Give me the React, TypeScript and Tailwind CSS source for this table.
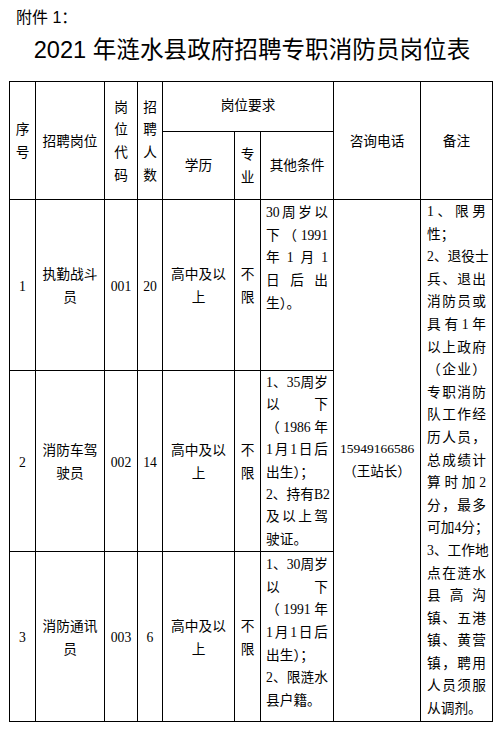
import React from "react"

const cellFont = { fontFamily: '"Liberation Serif", "Noto Sans CJK SC", serif' }

// one justified line: digit/latin runs stay together, every other glyph is spread out
const J = ({ t, last }: { t: string; last?: boolean }) => {
  if (last) return <div className="whitespace-nowrap text-left">{t}</div>
  const parts = t.match(/[0-9A-Za-z]+|\S/g) || []
  return (
    <div className="flex justify-between whitespace-nowrap">
      {parts.map((p, i) => (
        <span key={i}>{p}</span>
      ))}
    </div>
  )
}

const Lines = ({ lines }: { lines: string[] }) => (
  <>
    {lines.map((l, i) => (
      <div key={i} className="whitespace-nowrap">
        {l}
      </div>
    ))}
  </>
)

const Para = ({ lines }: { lines: [string, boolean?][] }) => (
  <>
    {lines.map(([t, last], i) => (
      <J key={i} t={t} last={last} />
    ))}
  </>
)

const td = "border border-black text-center align-middle p-0"

const rows = [
  {
    no: "1",
    name: ["执勤战斗", "员"],
    code: "001",
    count: "20",
    other: [["30 周岁以"], ["下（ 1991"], ["年 1 月 1"], ["日 后 出"], ["生）。", true]] as [string, boolean?][],
    h: "h-[171px]",
    oc: "pt-[2px] leading-[22.7px]",
  },
  {
    no: "2",
    name: ["消防车驾", "驶员"],
    code: "002",
    count: "14",
    other: [
      ["1、35 周岁"],
      ["以 下"],
      ["（1986 年"],
      ["1月1日后"],
      ["出生）；", true],
      ["2、持有 B2"],
      ["及以上驾"],
      ["驶证。", true],
    ] as [string, boolean?][],
    h: "h-[181px]",
    oc: "pt-px leading-[22.4px]",
  },
  {
    no: "3",
    name: ["消防通讯", "员"],
    code: "003",
    count: "6",
    other: [
      ["1、30 周岁"],
      ["以 下"],
      ["（1991 年"],
      ["1月1日后"],
      ["出生）；", true],
      ["2、限涟水"],
      ["县户籍。", true],
    ] as [string, boolean?][],
    h: "h-[170px]",
    oc: "pt-[2px] leading-[22.6px]",
  },
]

const notes: [string, boolean?][] = [
  ["1、限男"],
  ["性；", true],
  ["2、退役士"],
  ["兵、退出"],
  ["消防员或"],
  ["具有 1 年"],
  ["以上政府"],
  ["（企业）"],
  ["专职消防"],
  ["队工作经"],
  ["历人员，"],
  ["总成绩计"],
  ["算时加 2"],
  ["分，最多"],
  ["可加4分；", true],
  ["3、工作地"],
  ["点在涟水"],
  ["县高沟"],
  ["镇、五港"],
  ["镇、黄营"],
  ["镇，聘用"],
  ["人员须服"],
  ["从调剂。", true],
]

export default function App() {
  return (
    <div className="w-[504px] h-[734px] bg-white text-black overflow-hidden">
      <div
        className="pt-[6px] pl-[16px] text-[16px] leading-[24px]"
        style={{ fontFamily: '"Liberation Sans", "Noto Sans CJK SC", sans-serif' }}
      >
        附件 1：
      </div>
      <div
        className="mt-[4px] text-center text-[23.6px] leading-[32px]"
        style={{ fontFamily: '"Liberation Sans", "Noto Sans CJK SC", sans-serif' }}
      >
        2021 年涟水县政府招聘专职消防员岗位表
      </div>

      <table
        className="mt-[15px] ml-[9px] w-[483px] table-fixed border-collapse text-[13.7px] leading-[22.7px]"
        style={cellFont}
      >
        <colgroup>
          <col className="w-[26px]" />
          <col className="w-[69px]" />
          <col className="w-[33px]" />
          <col className="w-[25px]" />
          <col className="w-[72px]" />
          <col className="w-[26px]" />
          <col className="w-[73px]" />
          <col className="w-[87px]" />
          <col className="w-[72px]" />
        </colgroup>
        <tbody>
          <tr className="h-[50px]">
            <td rowSpan={2} className={td + " pt-[3px]"}>
              <Lines lines={["序", "号"]} />
            </td>
            <td rowSpan={2} className={td + " pt-[3px]"}>
              招聘岗位
            </td>
            <td rowSpan={2} className={td + " pt-[3px]"}>
              <Lines lines={["岗", "位", "代", "码"]} />
            </td>
            <td rowSpan={2} className={td + " pt-[3px]"}>
              <Lines lines={["招", "聘", "人", "数"]} />
            </td>
            <td colSpan={3} className={td}>
              岗位要求
            </td>
            <td rowSpan={2} className={td + " pt-[3px]"}>
              咨询电话
            </td>
            <td rowSpan={2} className={td + " pt-[3px]"}>
              备注
            </td>
          </tr>
          <tr className="h-[68px]">
            <td className={td + " pt-[2px]"}>学历</td>
            <td className={td + " pt-[2px]"}>
              <Lines lines={["专", "业"]} />
            </td>
            <td className={td + " pt-[2px]"}>其他条件</td>
          </tr>

          {rows.map((r, i) => (
            <tr key={r.no} className={r.h}>
              <td className={td + " pt-[4px]"}>{r.no}</td>
              <td className={td + " pt-[4px]"}>
                <Lines lines={r.name} />
              </td>
              <td className={td + " pt-[4px]"}>{r.code}</td>
              <td className={td + " pt-[4px]"}>{r.count}</td>
              <td className={td + " pt-[4px]"}>
                <Lines lines={["高中及以", "上"]} />
              </td>
              <td className={td + " pt-[4px]"}>
                <Lines lines={["不", "限"]} />
              </td>
              <td className={"border border-black align-top px-[5px] " + r.oc}>
                <Para lines={r.other} />
              </td>
              {i === 0 && (
                <>
                  <td rowSpan={3} className={td + " text-[13.5px]"}>
                    <div>15949166586</div>
                    <div>（王站长）</div>
                  </td>
                  <td rowSpan={3} className="border border-black align-top px-[6px] pt-px leading-[22.6px]">
                    <Para lines={notes} />
                  </td>
                </>
              )}
            </tr>
          ))}
        </tbody>
      </table>
    </div>
  )
}
